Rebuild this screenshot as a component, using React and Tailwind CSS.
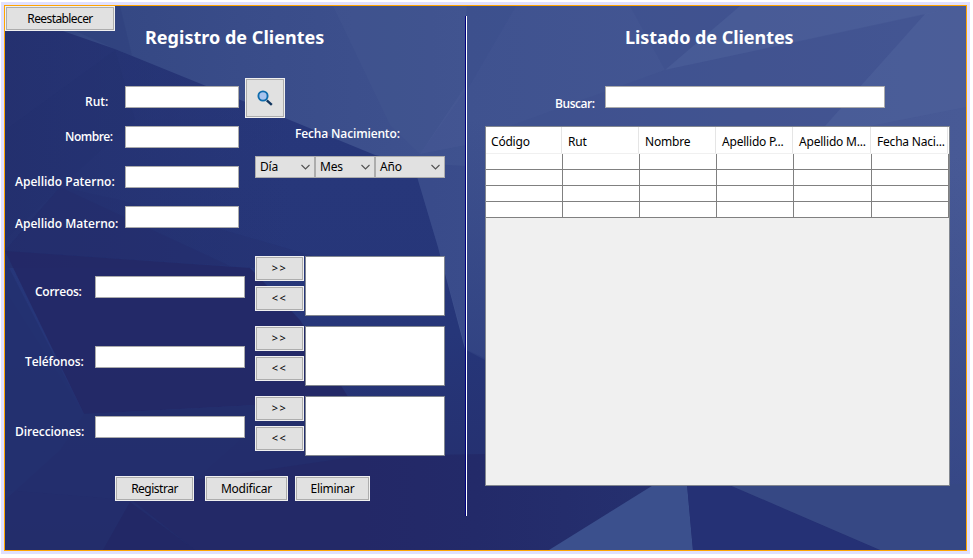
const label = "whitespace-nowrap font-['Open_Sans','Noto_Sans',sans-serif] text-[12px] leading-4 font-semibold text-white";
const title = "whitespace-nowrap font-['Noto_Sans',sans-serif] text-[18px] leading-6 font-bold text-white";

function Backdrop() {
  return (
    <svg className="absolute inset-0 h-full w-full" viewBox="5 6 961 544" preserveAspectRatio="none" aria-hidden="true">
      <defs>
        <linearGradient id="base" x1="0" y1="0" x2="0" y2="1">
          <stop offset="0" stopColor="#28387b" />
          <stop offset="0.6" stopColor="#263679" />
          <stop offset="1" stopColor="#242d6b" />
        </linearGradient>
        <linearGradient id="light" gradientUnits="userSpaceOnUse" x1="60" y1="0" x2="966" y2="0">
          <stop offset="0" stopColor="#334681" />
          <stop offset="0.2" stopColor="#394c89" />
          <stop offset="0.45" stopColor="#3f528f" />
          <stop offset="1" stopColor="#485a96" />
        </linearGradient>
        <linearGradient id="shade" x1="0" y1="0" x2="0" y2="1">
          <stop offset="0" stopColor="#2f4080" stopOpacity="0" />
          <stop offset="1" stopColor="#2f4080" stopOpacity="0.85" />
        </linearGradient>
        <linearGradient id="left" gradientUnits="userSpaceOnUse" x1="5" y1="0" x2="290" y2="0">
          <stop offset="0" stopColor="#24306e" stopOpacity="0.9" />
          <stop offset="1" stopColor="#24306e" stopOpacity="0" />
        </linearGradient>
        <linearGradient id="floor" gradientUnits="userSpaceOnUse" x1="360" y1="0" x2="651" y2="0">
          <stop offset="0" stopColor="#232867" />
          <stop offset="0.4" stopColor="#232a69" />
          <stop offset="1" stopColor="#25306f" />
        </linearGradient>
      </defs>
      <rect x="5" y="6" width="961" height="544" fill="url(#base)" />
      <rect x="5" y="6" width="290" height="262" fill="url(#left)" />
      <polygon points="115,50 135,120 60,187 5,240 5,130" fill="#222c69" opacity="0.15" />
      <polygon points="60,30 60,6 966,6 966,550 485,358 465,349 438,247 413,163 375,155 285,118 115,49" fill="url(#light)" />
      <polygon points="113,6 120,6 132,56 115,49 60,24" fill="#2b3b79" opacity="0.35" />
      <polygon points="333,6 466,6 466,90 420,154 390,125" fill="#4b5e98" opacity="0.2" />
      <polygon points="420,154 466,85 466,145" fill="#53669e" opacity="0.2" />
      <polygon points="413,163 466,166 466,349 438,247" fill="#304384" opacity="0.35" />
      <polygon points="467,6 516,6 467,90" fill="#384c8a" opacity="0.3" />
      <polygon points="630,6 740,6 665,70" fill="#3b4e8b" opacity="0.4" />
      <polygon points="740,6 966,6 665,70" fill="#53669e" opacity="0.3" />
      <polygon points="665,70 925,14 825,126 510,126" fill="#3b4e8c" opacity="0.35" />
      <polygon points="925,14 966,6 966,107 870,126 825,126" fill="#53669e" opacity="0.3" />
      <polygon points="466,120 485,120 485,360 466,350" fill="url(#shade)" />
      <polygon points="949,160 966,155 966,550 949,550" fill="url(#shade)" />
      <polygon points="60,187 230,266 5,251" fill="#232a69" opacity="0.4" />
      <polygon points="60,187 120,200 320,258 250,268 5,251" fill="#242e6d" opacity="0.3" />
      <polygon points="5,251 250,268 300,320 350,400 84,414" fill="#232866" opacity="0.9" />
      <polygon points="84,414 350,400 420,457 466,457 466,550 5,550 5,290" fill="#242e6c" opacity="0.9" />
      <polygon points="5,260 84,414 60,450 5,500" fill="#243170" opacity="0.9" />
      <polygon points="84,413 130,418 240,440 195,480 130,500 5,490" fill="#25326f" opacity="0.3" />
      <polygon points="195,480 360,456 360,550 195,550 132,500" fill="#232867" opacity="0.8" />
      <polygon points="360,456 485,454 485,484 655,484 549,550 360,550" fill="url(#floor)" />
      <polygon points="130,502 195,550 103,550" fill="#222562" opacity="0.6" />
      <polygon points="655,484 687,484 693,550 549,550" fill="#3b508d" />
      <polygon points="687,484 727,484 880,550 693,550" fill="#253175" />
      <polygon points="727,484 966,484 966,550 880,550" fill="#364884" />
    </svg>
  );
}

function Button({ children, className, size = "text-[12px]" }) {
  return (
    <button className={`h-[25px] shrink-0 border border-[#f0f0f0] bg-[#e1e1e1] font-['Noto_Sans',sans-serif] text-black ${size} ${className}`}>
      <span className="flex h-full items-center justify-center border border-[#adadad]">{children}</span>
    </button>
  );
}

function Field({ text, labelClass }) {
  return (
    <div className="flex h-10 items-start justify-between">
      <span className={`${label} ${labelClass}`}>{text}</span>
      <input className="h-[22px] w-[114px] border border-[#ababab] bg-white" />
    </div>
  );
}

function Combo({ text, className }) {
  return (
    <div className={`flex h-[22px] items-center justify-between border border-[#adadad] bg-[#e1e1e1] px-1 font-['Noto_Sans',sans-serif] text-[12px] leading-none text-black ${className}`}>
      <span className="tracking-[-0.2px]">{text}</span>
      <svg width="9" height="6" viewBox="0 0 9 6" fill="none" stroke="#505050" strokeWidth="1.1">
        <path d="M.5 1 4.5 5l4-4" />
      </svg>
    </div>
  );
}

function ListEditor({ text, labelClass }) {
  return (
    <div className="flex h-[60px] items-start">
      <div className="w-[90px] pt-7">
        <div className={`${label} ${labelClass}`}>{text}</div>
      </div>
      <input className="mt-5 h-[22px] w-[150px] border border-[#ababab] bg-white" />
      <div className="ml-2.5 flex flex-col gap-[5px]">
        <Button size="text-[11px]" className="w-[49px] tracking-[1.5px]">&gt;&gt;</Button>
        <Button size="text-[11px]" className="w-[49px] tracking-[1.5px]">&lt;&lt;</Button>
      </div>
      <div className="ml-px h-[60px] w-[140px] border border-[#828790] bg-white" />
    </div>
  );
}

const headers = ["Código", "Rut", "Nombre", "Apellido P...", "Apellido M...", "Fecha Naci..."];
const grid = "grid grid-cols-[77px_77px_77px_77px_78px_77px]";

function ClientTable() {
  return (
    <div className="mt-[18px] ml-[18px] h-[360px] w-[465px] border border-[#828790] bg-[#f0f0f0]">
      <div className={`${grid} h-[27px] border-b border-[#f0f0f0] bg-white`}>
        {headers.map((h) => (
          <div key={h} className="mr-px border-r border-[#e5e5e5] pt-[7px] pl-[5px] font-['Noto_Sans',sans-serif] text-[12px] leading-4 tracking-[-0.2px] whitespace-nowrap text-black">
            {h}
          </div>
        ))}
      </div>
      {[0, 1, 2, 3].map((r) => (
        <div key={r} className={`${grid} h-4 bg-white`}>
          {headers.map((h) => (
            <div key={h} className="border-r border-b border-[#808080]" />
          ))}
        </div>
      ))}
    </div>
  );
}

export default function App() {
  return (
    <div className="h-[558px] w-[973px] overflow-hidden bg-white pt-0.5 pl-px">
      <div className="h-[552px] w-[969px] bg-[#e0e0ff] p-[3px]">
        <main className="relative h-[546px] w-[963px] overflow-hidden border border-[#ffa500]">
          <Backdrop />
          <div className="relative flex h-full">
            <section className="w-[460px] shrink-0">
              <div className="flex h-[72px] items-start">
                <Button className="w-[110px] tracking-[-0.6px]">Reestablecer</Button>
                <h1 className={`${title} mt-[19px] ml-[30px] tracking-[0.02px]`}>Registro de Clientes</h1>
              </div>
              <div className="flex h-[178px]">
                <div className="w-[234px] pt-2">
                  <Field text="Rut:" labelClass="pt-2 pl-20" />
                  <Field text="Nombre:" labelClass="pt-[3px] pl-[60px] tracking-[-0.5px]" />
                  <Field text="Apellido Paterno:" labelClass="pt-2 pl-2.5" />
                  <Field text="Apellido Materno:" labelClass="pt-2.5 pl-2.5" />
                </div>
                <div className="ml-1.5">
                  <button className="h-10 w-10 border border-[#f0f0f0] bg-[#e1e1e1]">
                    <span className="flex h-full items-center justify-center border border-[#adadad]">
                      <svg width="16" height="16" viewBox="0 0 16 16" fill="none">
                        <path d="m9.8 10.3 5 4.5" stroke="#12365f" strokeWidth="2.4" />
                        <circle cx="6" cy="6" r="4.6" fill="#a9c4ee" stroke="#0f6cad" strokeWidth="1.9" />
                      </svg>
                    </span>
                  </button>
                  <div className={`${label} mt-2 ml-[50px] tracking-[-0.15px]`}>Fecha Nacimiento:</div>
                  <div className="mt-3.5 ml-2.5 flex">
                    <Combo text="Día" className="w-[60px]" />
                    <Combo text="Mes" className="w-[60px]" />
                    <Combo text="Año" className="w-[70px]" />
                  </div>
                </div>
              </div>
              <div className="flex flex-col gap-2.5">
                <ListEditor text="Correos:" labelClass="pl-[30px] tracking-[-0.25px]" />
                <ListEditor text="Teléfonos:" labelClass="pl-5 tracking-[-0.1px]" />
                <ListEditor text="Direcciones:" labelClass="pl-2.5 tracking-[-0.1px]" />
              </div>
              <div className="mt-5 flex pl-[110px]">
                <Button className="w-[79px] tracking-[-0.5px]">Registrar</Button>
                <Button className="ml-[11px] w-[83px] tracking-[-0.25px]">Modificar</Button>
                <Button className="ml-[7px] w-[75px] tracking-[-0.3px]">Eliminar</Button>
              </div>
            </section>
            <div className="mt-2.5 h-[500px] w-0.5 shrink-0 border-r border-l border-r-white border-l-[#000080]" />
            <section className="flex-1">
              <h2 className={`${title} mt-[19px] ml-[158px] tracking-[-0.05px]`}>Listado de Clientes</h2>
              <div className="mt-[37px] flex h-[22px] items-start">
                <span className={`${label} mt-2.5 ml-[88px] w-[50px] tracking-[-0.45px]`}>Buscar:</span>
                <input className="h-[22px] w-[280px] border border-[#ababab] bg-white" />
              </div>
              <ClientTable />
            </section>
          </div>
        </main>
      </div>
    </div>
  );
}
